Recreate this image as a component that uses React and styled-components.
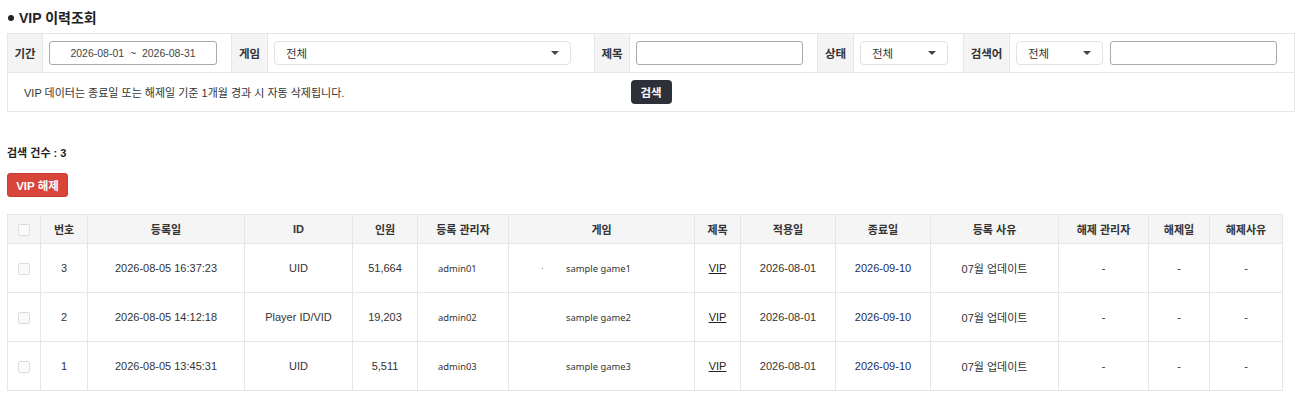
import React from "react";
import styled, { createGlobalStyle } from "styled-components";

const Global = createGlobalStyle`
  html, body { margin: 0; padding: 0; background: #fff; }
  body {
    font-family: "Liberation Sans", "Noto Sans CJK KR", Arial, sans-serif;
    font-size: 11px;
    color: #333;
  }
  * { box-sizing: border-box; }
`;

const Page = styled.div`
  padding: 8px 18px 0 7px;
  width: 1300px;
`;

const Title = styled.h2`
  margin: 0;
  height: 20px;
  line-height: 20px;
  font-size: 14px;
  font-weight: 700;
  color: #222;
  display: flex;
  align-items: center;
  gap: 5px;
  &::before {
    content: "";
    width: 6px;
    height: 6px;
    border-radius: 50%;
    background: #222;
    margin-left: 1px;
  }
`;

const Panel = styled.div`
  margin-top: 5px;
  width: 1288px;
  border: 1px solid #e6e6e6;
`;

const FilterRow = styled.div`
  display: flex;
  height: 39px;
  border-bottom: 1px solid #e6e6e6;
`;

const Label = styled.div`
  width: ${(p) => p.$w}px;
  flex: none;
  background: #f4f4f4;
  border-left: ${(p) => (p.$first ? "none" : "1px solid #e6e6e6")};
  border-right: 1px solid #e6e6e6;
  display: flex;
  align-items: center;
  justify-content: center;
  font-weight: 700;
  font-size: 11.5px;
  color: #333;
`;

const Value = styled.div`
  width: ${(p) => p.$w}px;
  flex: ${(p) => (p.$grow ? "1" : "none")};
  display: flex;
  align-items: center;
  gap: 7px;
  padding-left: 6px;
`;

const TextBox = styled.div`
  width: ${(p) => p.$w}px;
  height: 24px;
  border: 1px solid #a9a9a9;
  border-radius: 3px;
  display: flex;
  align-items: center;
  justify-content: center;
  font-size: 10.5px;
  color: #444;
  background: #fff;
`;

const Select = styled.div`
  width: ${(p) => p.$w}px;
  height: 24px;
  border: 1px solid #e2e2e2;
  border-radius: 4px;
  display: flex;
  align-items: center;
  justify-content: space-between;
  padding: 0 11px 0 11px;
  font-size: 11.5px;
  color: #333;
  background: #fff;
`;

const Caret = styled.span`
  width: 0;
  height: 0;
  border-left: 4px solid transparent;
  border-right: 4px solid transparent;
  border-top: 4px solid #444;
`;

const NoticeRow = styled.div`
  display: grid;
  grid-template-columns: 1fr auto 1fr;
  align-items: center;
  height: 38px;
`;

const Notice = styled.div`
  padding-left: 16px;
  font-size: 11px;
  color: #333;
`;

const DarkButton = styled.button`
  width: 41px;
  height: 24px;
  border: none;
  border-radius: 4px;
  background: #2d3038;
  color: #fff;
  font-family: inherit;
  font-weight: 700;
  font-size: 11.5px;
  padding: 0;
`;

const Count = styled.div`
  margin-top: 33px;
  line-height: 16px;
  font-weight: 700;
  font-size: 11px;
  color: #222;
`;

const RedButton = styled.button`
  margin-top: 12px;
  display: block;
  width: 61px;
  height: 24px;
  border: 1px solid #c93d33;
  border-radius: 3px;
  background: #d8453a;
  color: #fff;
  font-family: inherit;
  font-weight: 700;
  font-size: 11.5px;
  padding: 0;
`;

const Table = styled.table`
  margin-top: 17px;
  width: 1275px;
  border-collapse: collapse;
  table-layout: fixed;
`;

const Th = styled.th`
  height: 29px;
  background: #f5f5f5;
  border: 1px solid #e6e6e6;
  font-weight: 700;
  font-size: 11px;
  color: #333;
  padding: 0;
  text-align: center;
`;

const Td = styled.td`
  height: 49px;
  border: 1px solid #e6e6e6;
  font-size: 11px;
  color: ${(p) => p.$color || "#333"};
  padding: 0;
  text-align: ${(p) => p.$align || "center"};
  padding-left: ${(p) => p.$pl || 0}px;
`;

const Small = styled.span`
  font-family: "Noto Sans", "Noto Sans CJK KR", sans-serif;
  font-size: 9.4px;
  color: #333;
`;

const Dot = styled.span`
  display: inline-block;
  width: 1px;
  height: 1px;
  background: #888;
  vertical-align: middle;
  margin-right: 23px;
`;

const Hidden = styled.span`
  display: inline-block;
  width: 1px;
  margin-right: 23px;
`;

const Link = styled.span`
  text-decoration: underline;
  color: #222;
`;

const Check = styled.span`
  display: inline-block;
  width: 12px;
  height: 12px;
  border: 1px solid #dcdcdc;
  border-radius: 2px;
  background: #fafafa;
  vertical-align: middle;
`;

const cols = [33, 47, 157, 108, 65, 91, 186, 46, 95, 95, 128, 90, 61, 73];
const heads = ["", "번호", "등록일", "ID", "인원", "등록 관리자", "게임", "제목", "적용일", "종료일", "등록 사유", "해제 관리자", "해제일", "해제사유"];

const rows = [
  { no: 3, date: "2026-08-05 16:37:23", id: "UID", cnt: "51,664", admin: "admin01", game: "sample game1", dot: true },
  { no: 2, date: "2026-08-05 14:12:18", id: "Player ID/VID", cnt: "19,203", admin: "admin02", game: "sample game2" },
  { no: 1, date: "2026-08-05 13:45:31", id: "UID", cnt: "5,511", admin: "admin03", game: "sample game3" },
];

export default function App() {
  return (
    <Page>
      <Global />
      <Title>VIP 이력조회</Title>
      <Panel>
        <FilterRow>
          <Label $w={35} $first>기간</Label>
          <Value $w={188}>
            <TextBox $w={168}>2026-08-01&nbsp;&nbsp;~&nbsp;&nbsp;2026-08-31</TextBox>
          </Value>
          <Label $w={37}>게임</Label>
          <Value $w={326}>
            <Select $w={297}>전체<Caret /></Select>
          </Value>
          <Label $w={36}>제목</Label>
          <Value $w={187}>
            <TextBox $w={167} />
          </Value>
          <Label $w={37}>상태</Label>
          <Value $w={109}>
            <Select $w={88}>전체<Caret /></Select>
          </Value>
          <Label $w={47}>검색어</Label>
          <Value $grow>
            <Select $w={87}>전체<Caret /></Select>
            <TextBox $w={167} />
          </Value>
        </FilterRow>
        <NoticeRow>
          <Notice>VIP 데이터는 종료일 또는 해제일 기준 1개월 경과 시 자동 삭제됩니다.</Notice>
          <DarkButton>검색</DarkButton>
          <span />
        </NoticeRow>
      </Panel>
      <Count>검색 건수 : 3</Count>
      <RedButton>VIP 해제</RedButton>
      <Table>
        <colgroup>
          {cols.map((w, i) => (
            <col key={i} style={{ width: w }} />
          ))}
        </colgroup>
        <thead>
          <tr>
            {heads.map((h, i) => (
              <Th key={i}>{i === 0 ? <Check /> : h}</Th>
            ))}
          </tr>
        </thead>
        <tbody>
          {rows.map((r) => (
            <tr key={r.no}>
              <Td><Check /></Td>
              <Td>{r.no}</Td>
              <Td>{r.date}</Td>
              <Td>{r.id}</Td>
              <Td>{r.cnt}</Td>
              <Td $align="left" $pl={20}><Small>{r.admin}</Small></Td>
              <Td $align="left" $pl={33}>
                {r.dot ? <Dot /> : <Hidden />}
                <Small>{r.game}</Small>
              </Td>
              <Td><Link>VIP</Link></Td>
              <Td>2026-08-01</Td>
              <Td $color="#1c2c5e">2026-09-10</Td>
              <Td>07월 업데이트</Td>
              <Td>-</Td>
              <Td>-</Td>
              <Td>-</Td>
            </tr>
          ))}
        </tbody>
      </Table>
    </Page>
  );
}
